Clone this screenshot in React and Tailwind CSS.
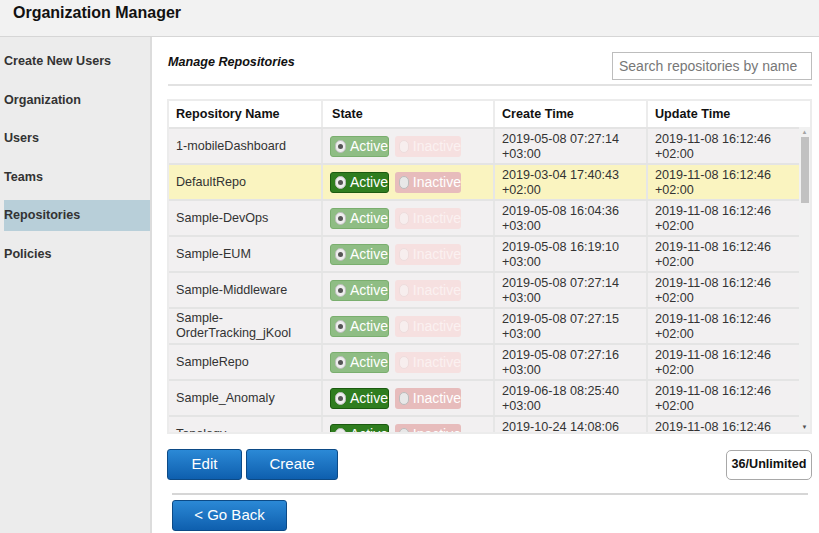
import React from "react";

const rows = [
  { name: "1-mobileDashboard", on: false, created: ["2019-05-08 07:27:14", "+03:00"] },
  { name: "DefaultRepo", on: true, hl: true, created: ["2019-03-04 17:40:43", "+02:00"] },
  { name: "Sample-DevOps", on: false, created: ["2019-05-08 16:04:36", "+03:00"] },
  { name: "Sample-EUM", on: false, created: ["2019-05-08 16:19:10", "+03:00"] },
  { name: "Sample-Middleware", on: false, created: ["2019-05-08 07:27:14", "+03:00"] },
  { name: "Sample-\nOrderTracking_jKool", on: false, created: ["2019-05-08 07:27:15", "+03:00"] },
  { name: "SampleRepo", on: false, created: ["2019-05-08 07:27:16", "+03:00"] },
  { name: "Sample_Anomaly", on: true, created: ["2019-06-18 08:25:40", "+03:00"] },
  { name: "Topology", on: true, created: ["2019-10-24 14:08:06", "+03:00"] },
];

const menu = ["Create New Users", "Organization", "Users", "Teams", "Repositories", "Policies"];

const cols = "grid grid-cols-[154px_172px_153px_155px]";

function Radio() {
  return (
    <span className="w-[13px] h-[13px] rounded-full flex items-center justify-center border bg-[#eeeeee] border-[#bdbdbd]">
      <span className="w-[5px] h-[5px] rounded-full bg-[#555]" />
    </span>
  );
}

function Toggle({ on }) {
  return (
    <div className="flex gap-[6px] items-center">
      <div
        className={`h-[21px] w-[59px] rounded-[3px] border flex items-center gap-[4px] pl-[4px] text-[14px] text-white ${
          on ? "bg-[#2f7d1f] border-[#1b5a10]" : "bg-[#8fbd84] border-[#7aae6e]"
        }`}
      >
        <Radio />
        <span>Active</span>
      </div>
      <div
        className={`h-[21px] w-[66px] rounded-[3px] flex items-center gap-[4px] pl-[4px] text-[14px] ${
          on ? "bg-[#e7bcbc] text-white" : "bg-[#f6e0e0] text-[#fbf1f1]"
        }`}
      >
        <span className={`w-[13px] h-[13px] rounded-full border ${on ? "bg-[#e8e8e8] border-[#bcbcbc]" : "bg-[#f7eeee] border-[#eedcdc]"}`} />
        <span>Inactive</span>
      </div>
    </div>
  );
}

export default function App() {
  return (
    <div className="w-[819px] h-[533px] overflow-hidden bg-white text-[#222] font-['Liberation_Sans',Arial,sans-serif] flex flex-col">
      <div className="h-[37px] shrink-0 bg-[#f2f2f2] border-b border-[#d6d6d6] pl-[13px] pt-[1px]">
        <h1 className="text-[16px] font-bold text-[#111]">Organization Manager</h1>
      </div>

      <div className="flex flex-1 min-h-0">
        {/* Sidebar */}
        <div className="w-[152px] shrink-0 bg-[#ececec] border-r-2 border-[#dcdcdc] pl-[4px] pt-[9px] flex flex-col gap-[7.6px]">
          {menu.map((m) => (
            <div
              key={m}
              className={`h-[31px] flex items-center text-[12.6px] font-bold text-[#333] ${m === "Repositories" ? "bg-[#b8cfd9]" : ""}`}
            >
              {m}
            </div>
          ))}
        </div>

        {/* Main */}
        <div className="flex-1 pl-[15px] pr-[7px] pt-[15px]">
          <div className="flex justify-between items-center">
            <h2 className="text-[12.6px] font-bold italic text-[#111] pl-[1px] -mt-[7px]">Manage Repositories</h2>
            <input
              placeholder="Search repositories by name"
              className="w-[200px] h-[28px] border border-[#bdbdbd] px-[6px] text-[14px] placeholder:text-[#777] outline-none"
            />
          </div>
          <div className="h-[2px] bg-[#e2e2e2] mt-[4px] ml-[1px]" />

          {/* Table */}
          <div className="mt-[13px] border-2 border-[#ececec] w-[645px]">
            <div className={`${cols} h-[26px] bg-white text-[12.6px] font-bold text-[#111]`}>
              <div className="px-[7px] flex items-center border-r-2 border-[#ececec]">Repository Name</div>
              <div className="px-[9px] flex items-center border-r-2 border-[#ececec]">State</div>
              <div className="px-[7px] flex items-center border-r-2 border-[#ececec]">Create Time</div>
              <div className="px-[7px] flex items-center">Update Time</div>
            </div>
            <div className="flex h-[305px] overflow-hidden">
              <div className="w-[632px] overflow-hidden">
                {rows.map((r) => (
                  <div
                    key={r.name}
                    className={`${cols} h-[36px] border-t-2 border-[#e4e4e4] text-[12.6px] ${r.hl ? "bg-[#faf4c0]" : "bg-[#f2f0f1]"}`}
                  >
                    <div className="px-[7px] flex items-center border-r-2 border-[#e6e6e6] whitespace-pre-line leading-[15px] text-[#333]">
                      {r.name}
                    </div>
                    <div className="px-[7px] flex items-center border-r-2 border-[#e6e6e6]">
                      <Toggle on={r.on} />
                    </div>
                    <div className="px-[7px] pt-[3px] leading-[15px] border-r-2 border-[#e6e6e6] text-[#333]">
                      <div>{r.created[0]}</div>
                      <div>{r.created[1]}</div>
                    </div>
                    <div className="px-[7px] pt-[3px] leading-[15px] text-[#333]">
                      <div>2019-11-08 16:12:46</div>
                      <div>+02:00</div>
                    </div>
                  </div>
                ))}
              </div>
              <div className="w-[11px] bg-[#f1f1f1] flex flex-col items-center">
                <span className="text-[6px] text-[#a3a3a3] leading-[10px]">▲</span>
                <div className="w-[8px] h-[66px] bg-[#c1c1c1]" />
                <div className="flex-1" />
                <span className="text-[6px] text-[#505050] leading-[10px]">▼</span>
              </div>
            </div>
          </div>

          {/* Actions */}
          <div className="flex justify-between items-center mt-[15px] w-[645px]">
            <div className="flex gap-[4px]">
              <button className="w-[75px] h-[31px] rounded-[3px] border border-[#0c4a86] bg-gradient-to-b from-[#2b89d6] to-[#0e5fae] text-white text-[15px]">
                Edit
              </button>
              <button className="w-[92px] h-[31px] rounded-[3px] border border-[#0c4a86] bg-gradient-to-b from-[#2b89d6] to-[#0e5fae] text-white text-[15px]">
                Create
              </button>
            </div>
            <div className="h-[30px] w-[86px] rounded-[5px] border border-[#a8a8a8] flex items-center justify-center text-[12.6px] font-bold text-[#111]">
              36/Unlimited
            </div>
          </div>

          <div className="h-[2px] bg-[#d6d6d6] mt-[13px] ml-[5px] w-[636px]" />

          <button className="mt-[5px] ml-[5px] w-[115px] h-[31px] rounded-[3px] border border-[#0c4a86] bg-gradient-to-b from-[#2b89d6] to-[#0e5fae] text-white text-[15px]">
            &lt; Go Back
          </button>
        </div>
      </div>
    </div>
  );
}
